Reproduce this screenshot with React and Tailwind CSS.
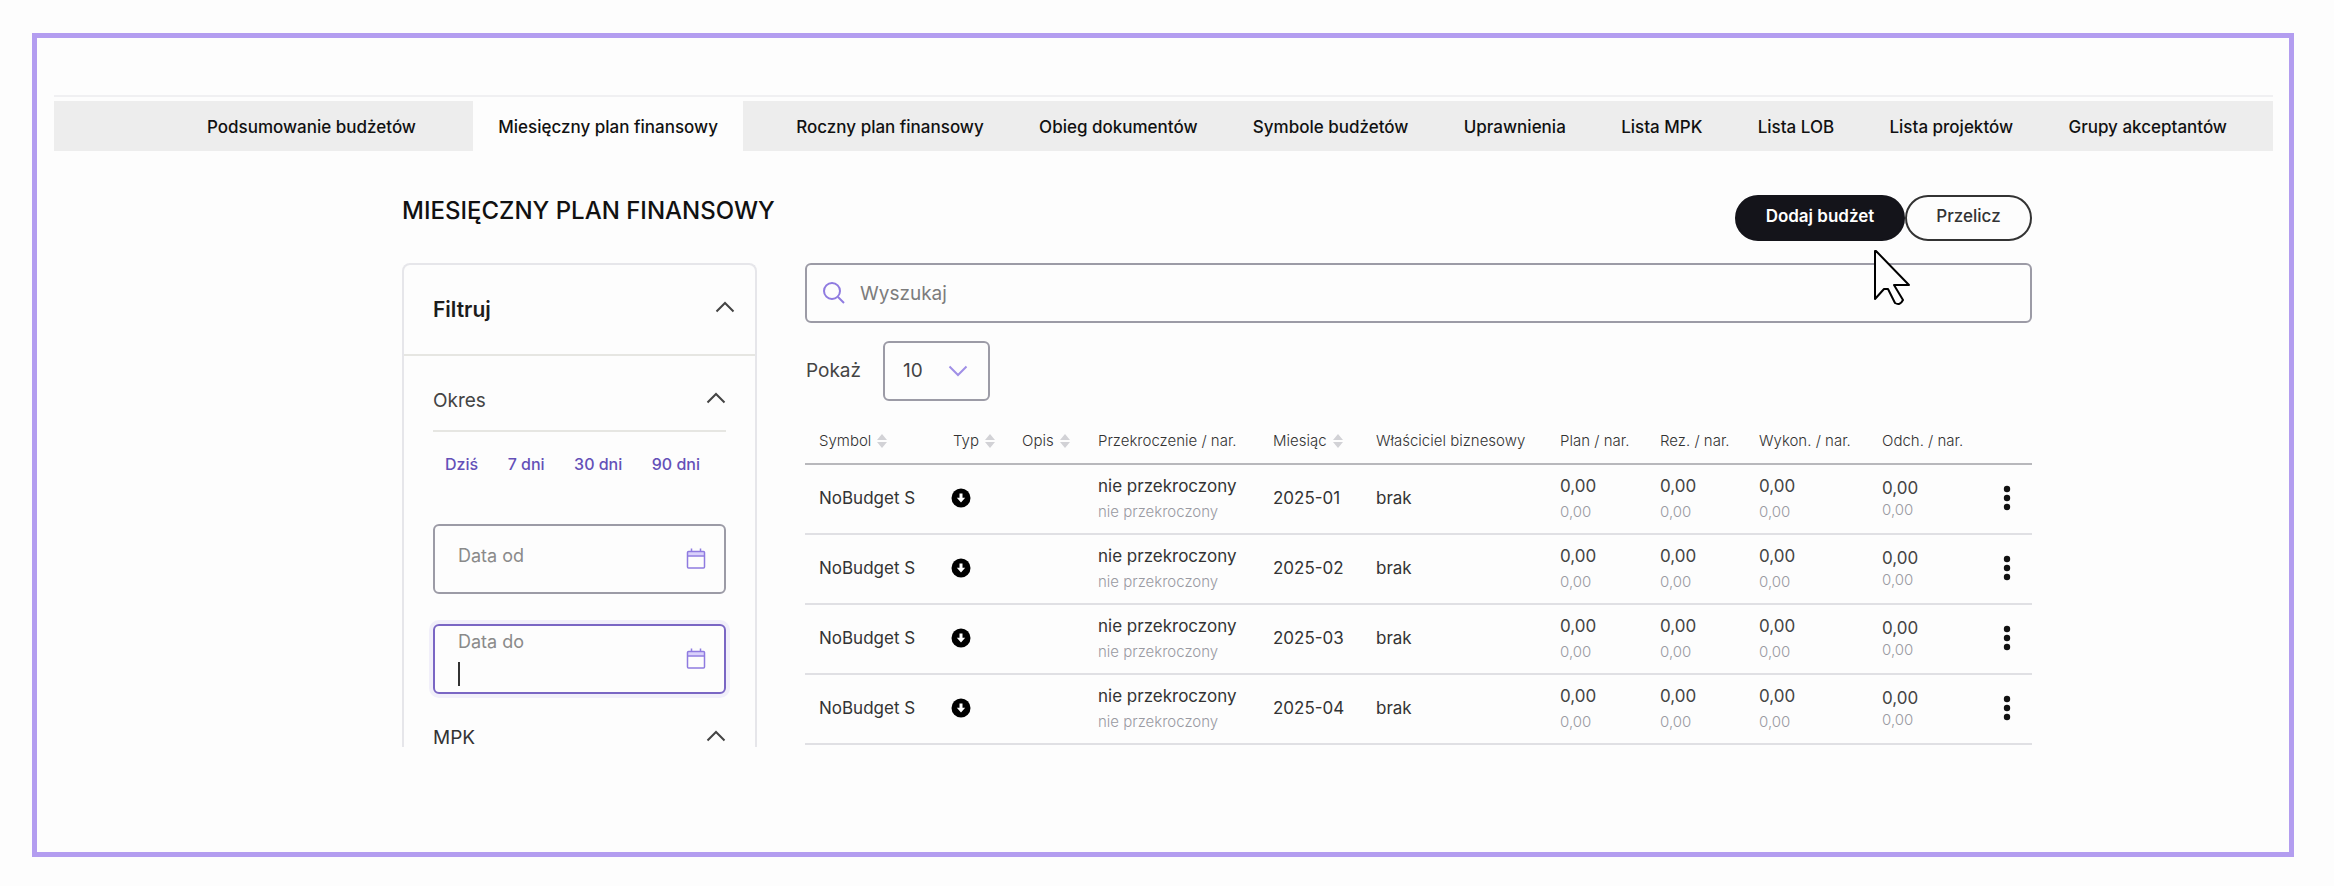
// src/App.jsx
import React, { useState } from "react";

const tabs = [
  "Podsumowanie budżetów",
  "Miesięczny plan finansowy",
  "Roczny plan finansowy",
  "Obieg dokumentów",
  "Symbole budżetów",
  "Uprawnienia",
  "Lista MPK",
  "Lista LOB",
  "Lista projektów",
  "Grupy akceptantów",
];

const columns = [
  { label: "Symbol", width: "w-[134px]", sortable: true },
  { label: "Typ", width: "w-[69px]", sortable: true },
  { label: "Opis", width: "w-[76px]", sortable: true },
  { label: "Przekroczenie / nar.", width: "w-[175px]" },
  { label: "Miesiąc", width: "w-[103px]", sortable: true },
  { label: "Właściciel biznesowy", width: "w-[184px]" },
  { label: "Plan / nar.", width: "w-[100px]" },
  { label: "Rez. / nar.", width: "w-[99px]" },
  { label: "Wykon. / nar.", width: "w-[123px]" },
  { label: "Odch. / nar.", width: "w-[114px]" },
];

const rows = ["2025-01", "2025-02", "2025-03", "2025-04"].map((month) => ({
  symbol: "NoBudget S",
  exceeded: "nie przekroczony",
  month,
  owner: "brak",
  plan: "0,00",
  reserved: "0,00",
  done: "0,00",
  deviation: "0,00",
}));

function Chevron({ className }) {
  return (
    <svg viewBox="0 0 20 12" className={className} fill="none" stroke="currentColor" strokeWidth="2">
      <path d="M1.5 10.5 10 2l8.5 8.5" />
    </svg>
  );
}

function SortIcon() {
  return (
    <svg viewBox="0 0 10 14" className="h-3.5 w-2.5 text-[#d2d2d6]" fill="currentColor">
      <path d="M5 0l5 6H0zM5 14l5-6H0z" />
    </svg>
  );
}

function CalendarIcon() {
  return (
    <svg viewBox="0 0 20 22" className="h-[22px] w-5 text-[#8f7be0]" fill="none" stroke="currentColor" strokeWidth="1.5">
      <path d="M2 4h16v3.5H2z" fill="#d9d1fb" stroke="none" />
      <rect x="1.5" y="3.5" width="17" height="16.5" rx="1" />
      <path d="M1.5 8h17M5.5 0.5v3M14.5 0.5v3" />
    </svg>
  );
}

function TypeIcon() {
  return (
    <svg viewBox="0 0 20 20" className="h-5 w-5" role="img" aria-label="Koszt">
      <circle cx="10" cy="10" r="9.5" fill="#000" />
      <path d="M8.5 5.5h3v4.2h2.7L10 14.5 5.8 9.7h2.7z" fill="#fff" />
    </svg>
  );
}

function Pointer() {
  return (
    <svg viewBox="0 0 38 58" className="pointer-events-none h-[58px] w-[38px]">
      <path
        d="M2 2v48l9-10h4l7 14q5 3 8-3l-9-15h15L3 2z"
        fill="#fdfdfd"
        stroke="#000"
        strokeWidth="2"
        strokeLinejoin="round"
      />
    </svg>
  );
}

function DateField({ id, label, value, onChange, active }) {
  return (
    <div
      className={
        active
          ? "flex h-[70px] items-center justify-between rounded-md border-2 border-[#7a66c4] pl-[23px] pr-[18px] ring-4 ring-[#f1effa]"
          : "flex h-[70px] items-center justify-between rounded-md border-2 border-[#9c9ba6] pl-[23px] pr-[18px]"
      }
    >
      <div className="flex h-full min-w-0 flex-1 flex-col pt-1">
        <label
          htmlFor={id}
          className={active ? "text-lg leading-6 text-[#8a8a8a]" : "pt-3.5 text-lg leading-6 text-[#8a8a8a]"}
        >
          {label}
        </label>
        <div className="flex items-center">
          {active && <span className="mt-2 h-6 w-0.5 shrink-0 bg-[#333]" />}
          <input
            id={id}
            type="text"
            value={value}
            onChange={(e) => onChange(e.target.value)}
            className="h-5 w-full min-w-0 bg-transparent text-lg outline-none"
          />
        </div>
      </div>
      <CalendarIcon />
    </div>
  );
}

function Amount({ value, tight }) {
  return (
    <div className="pb-0.5">
      <div className="text-[17px] leading-6 text-[#444]">{value}</div>
      <div
        className={
          tight
            ? "text-[15px] font-light leading-5 text-[#9a9aa2]"
            : "pt-1 text-[15px] font-light leading-5 text-[#9a9aa2]"
        }
      >
        {value}
      </div>
    </div>
  );
}

function Filters() {
  const [from, setFrom] = useState("");
  const [to, setTo] = useState("");

  return (
    <aside className="h-[484px] w-[355px] shrink-0 rounded-t-lg border-2 border-b-0 border-[#e6e6ea]">
      <div className="flex h-[91px] items-center justify-between border-b-2 border-[#e6e6e2] pl-[29px] pr-5">
        <h2 className="text-[21px] font-semibold text-[#1c1c1c]">Filtruj</h2>
        <button type="button" aria-label="Zwiń filtry" className="pb-1.5">
          <Chevron className="h-3 w-5 text-[#444]" />
        </button>
      </div>

      <div className="px-[29px]">
        <div className="flex h-[76px] items-center justify-between border-b-2 border-[#e6e6e2] pt-4">
          <h3 className="text-[19px] text-[#444]">Okres</h3>
          <button type="button" aria-label="Zwiń okres" className="pb-1.5">
            <Chevron className="h-3 w-5 text-[#444]" />
          </button>
        </div>

        {/* Quick ranges */}
        <div className="flex justify-between pb-[46px] pl-3 pr-[26px] pt-[18px]">
          {["Dziś", "7 dni", "30 dni", "90 dni"].map((range) => (
            <button key={range} type="button" className="text-base font-medium leading-7 text-[#6450b8]">
              {range}
            </button>
          ))}
        </div>

        <div className="flex flex-col gap-[30px]">
          <DateField id="date-from" label="Data od" value={from} onChange={setFrom} />
          <DateField id="date-to" label="Data do" value={to} onChange={setTo} active />
        </div>

        <div className="flex items-center justify-between pt-[34px]">
          <h3 className="text-[19px] leading-5 text-[#333]">MPK</h3>
          <button type="button" aria-label="Zwiń MPK" className="pb-1">
            <Chevron className="h-3 w-5 text-[#444]" />
          </button>
        </div>
      </div>
    </aside>
  );
}

function BudgetTable() {
  return (
    <table className="w-full table-fixed border-collapse text-left">
      <thead>
        <tr className="h-[53px] border-b-2 border-[#b8b8bc]">
          {columns.map((col) => (
            <th
              key={col.label}
              className={`${col.width} whitespace-nowrap pl-3.5 pt-2 text-[15px] font-light text-[#333]`}
            >
              <span className="flex items-center gap-1.5">
                {col.label}
                {col.sortable && <SortIcon />}
              </span>
            </th>
          ))}
          <th className="w-[50px]" aria-label="Akcje" />
        </tr>
      </thead>
      <tbody>
        {rows.map((row) => (
          <tr key={row.month} className="h-[70px] whitespace-nowrap border-b-2 border-[#e0e0e4] text-[17px] text-[#333]">
            <td className="pl-3.5">{row.symbol}</td>
            <td className="pb-0.5 pl-3">
              <TypeIcon />
            </td>
            <td className="pl-3.5" />
            <td className="pl-3.5">
              <div className="leading-6">{row.exceeded}</div>
              <div className="pb-0.5 pt-1 text-[15px] font-light leading-5 text-[#9a9aa2]">{row.exceeded}</div>
            </td>
            <td className="pl-3.5">{row.month}</td>
            <td className="pl-3.5">{row.owner}</td>
            <td className="pl-3.5">
              <Amount value={row.plan} />
            </td>
            <td className="pl-3.5">
              <Amount value={row.reserved} />
            </td>
            <td className="pl-3.5">
              <Amount value={row.done} />
            </td>
            <td className="pl-3.5">
              <Amount value={row.deviation} tight />
            </td>
            <td className="pb-0.5">
              <button type="button" aria-label="Więcej" className="mx-auto block">
                <svg viewBox="0 0 8 26" className="h-[26px] w-2" fill="#111">
                  <circle cx="4" cy="4" r="3.2" />
                  <circle cx="4" cy="13" r="3.2" />
                  <circle cx="4" cy="22" r="3.2" />
                </svg>
              </button>
            </td>
          </tr>
        ))}
      </tbody>
    </table>
  );
}

export default function App() {
  const [activeTab, setActiveTab] = useState("Miesięczny plan finansowy");
  const [query, setQuery] = useState("");
  const [pageSize, setPageSize] = useState("10");

  return (
    <div className="min-h-screen bg-[#fdfdfd] pb-[29px] pl-8 pr-10 pt-[33px] font-[Inter,sans-serif]">
      <div className="border-[5px] border-[#b39df0] pb-[105px] pl-[17px] pr-4 pt-[57px]">
        {/* Navigation */}
        <nav className="border-t-2 border-[#f0f0f2] pt-1">
          <div className="flex h-[50px] justify-between bg-[#ededed] pl-[127px] pr-5">
            {tabs.map((tab) => (
              <button
                key={tab}
                type="button"
                onClick={() => setActiveTab(tab)}
                className={
                  tab === activeTab
                    ? "ml-7 mr-6 whitespace-nowrap bg-[#fdfdfd] px-[25px] pt-1 text-[17px] font-medium text-[#111]"
                    : "whitespace-nowrap px-[26px] pt-1 text-[17px] font-medium text-[#111]"
                }
              >
                {tab}
              </button>
            ))}
          </div>
        </nav>

        <main className="pl-[348px] pr-[241px] pt-11">
          <div className="flex items-start justify-between">
            <h1 className="text-2xl font-medium leading-8 text-[#111]">MIESIĘCZNY PLAN FINANSOWY</h1>
            <div className="relative flex">
              <button
                type="button"
                className="h-[46px] w-[170px] rounded-full border-2 border-[#14141a] bg-[#14141a] pb-0.5 text-[17px] font-semibold text-white"
              >
                Dodaj budżet
              </button>
              <button
                type="button"
                className="h-[46px] w-[127px] rounded-full border-2 border-[#333] pb-0.5 text-[17px] font-medium text-[#333]"
              >
                Przelicz
              </button>
              <div className="absolute right-[121px] top-[54px] z-10">
                <Pointer />
              </div>
            </div>
          </div>

          <div className="flex gap-12 pt-[22px]">
            <Filters />

            <section className="min-w-0 flex-1">
              <label className="flex h-[60px] items-center gap-3.5 rounded-md border-2 border-[#9c9ba6] pl-[15px]">
                <svg viewBox="0 0 24 24" className="h-6 w-6 text-[#8f7be0]" fill="none" stroke="currentColor" strokeWidth="2">
                  <circle cx="10" cy="10" r="8" />
                  <path d="M16 16l6 6" />
                </svg>
                <input
                  type="text"
                  aria-label="Wyszukaj"
                  placeholder="Wyszukaj"
                  value={query}
                  onChange={(e) => setQuery(e.target.value)}
                  className="h-full flex-1 bg-transparent text-[19px] text-[#333] outline-none placeholder:text-[#7c7c7c]"
                />
              </label>

              <div className="flex items-center gap-5 pb-2.5 pl-px pt-[18px]">
                <label htmlFor="page-size" className="w-[57px] text-[19px] text-[#444]">
                  Pokaż
                </label>
                <div className="relative">
                  <select
                    id="page-size"
                    value={pageSize}
                    onChange={(e) => setPageSize(e.target.value)}
                    className="block h-[60px] w-[107px] appearance-none rounded-md border-2 border-[#9c9ba6] bg-transparent pl-[18px] text-[19px] text-[#444]"
                  >
                    <option>10</option>
                    <option>25</option>
                    <option>50</option>
                  </select>
                  <Chevron className="pointer-events-none absolute right-[22px] top-6 h-3 w-5 rotate-180 text-[#a08fe6]" />
                </div>
              </div>

              <BudgetTable />
            </section>
          </div>
        </main>
      </div>
    </div>
  );
}
